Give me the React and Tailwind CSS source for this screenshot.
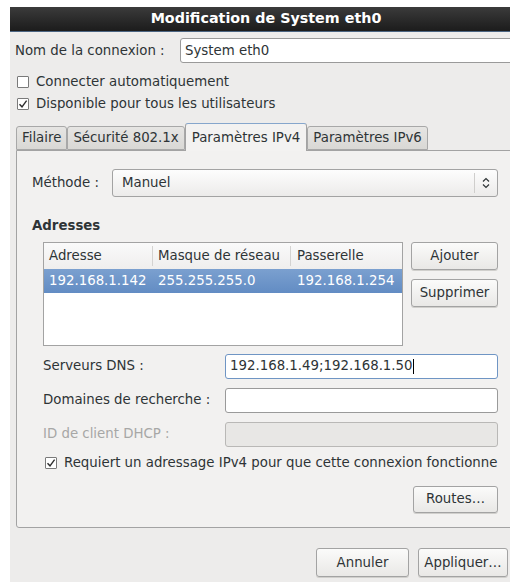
import React from 'react'

const font = { fontFamily: '"DejaVu Sans", Verdana, sans-serif' }

function CheckBox({ checked, label, className = '' }) {
  return (
    <div className={`flex items-center h-[20px] gap-[7px] ${className}`}>
      <span className="w-[12px] h-[12px] shrink-0 border border-[#7a7a7a] bg-white rounded-[1px] flex items-center justify-center">
        {checked && (
          <svg width="10" height="10" viewBox="0 0 10 10">
            <path d="M1.5 5.2 L4 7.8 L8.6 1.6" fill="none" stroke="#2e2e2e" strokeWidth="1.4" />
          </svg>
        )}
      </span>
      <span className="whitespace-nowrap">{label}</span>
    </div>
  )
}

function Button({ children, className = '' }) {
  return (
    <div
      className={`flex items-center justify-center shrink-0 border border-[#a3a3a3] rounded-[3px] bg-gradient-to-b from-[#fbfbfa] to-[#e9e8e6] shadow-[0_1px_0_#d0cfcc] text-[#2e3436] ${className}`}
    >
      {children}
    </div>
  )
}

function Tab({ label, active, className = '' }) {
  if (active) {
    return (
      <div className={`h-[28px] px-[6px] flex items-center border border-[#a3a3a3] border-b-0 border-t-[#86a6cc] rounded-t-[3px] bg-[#f3f2f1] -mb-px relative z-10 whitespace-nowrap ${className}`}>
        {label}
      </div>
    )
  }
  return (
    <div className={`h-[24px] px-[5px] flex items-center border border-[#a8a8a8] rounded-t-[3px] bg-gradient-to-b from-[#e6e5e3] to-[#d9d8d5] whitespace-nowrap ${className}`}>
      {label}
    </div>
  )
}

function Field({ value, focused, disabled, className = '' }) {
  let look = 'border-[#9a9a9a] bg-white'
  if (focused) look = 'border-[#6f95c4] bg-white'
  if (disabled) look = 'border-[#b9b8b6] bg-[#e8e7e5]'
  return (
    <div className={`h-[25px] shrink-0 border rounded-[3px] flex items-center px-[4px] whitespace-nowrap ${look} ${className}`}>
      {value}
      {focused && <span className="w-px h-[15px] bg-black" />}
    </div>
  )
}

export default function App() {
  return (
    <div style={font} className="w-[510px] h-[583px] overflow-hidden bg-white text-[13.33px] text-[#2e3436]">
      <div className="ml-[10px] mt-[7px] w-[512px] h-[575px] flex flex-col bg-[#edeceb]">
        {/* title bar */}
        <div className="h-[25px] shrink-0 flex items-center justify-center bg-gradient-to-b from-[#3b3b3b] to-[#1c1c1c] border-b border-[#4b6582] text-white font-bold text-[14.3px]">
          Modification de System eth0
        </div>

        <div className="flex items-center mt-[6px] ml-[5px]">
          <span className="w-[165px] shrink-0">Nom de la connexion :</span>
          <Field value="System eth0" className="w-[400px]" />
        </div>

        <CheckBox label="Connecter automatiquement" className="mt-[9px] ml-[7px]" />
        <CheckBox label="Disponible pour tous les utilisateurs" checked className="mt-[2px] ml-[7px]" />

        {/* notebook */}
        <div className="ml-[6px] mt-[8px] flex items-end h-[28px] shrink-0">
          <Tab label="Filaire" />
          <Tab label="Sécurité 802.1x" />
          <Tab label="Paramètres IPv4" active />
          <Tab label="Paramètres IPv6" />
        </div>
        <div className="ml-[6px] mr-[2px] h-[378px] shrink-0 border border-[#a3a3a3] rounded-b-[3px] bg-[#f2f1f0] flex flex-col pl-[15px] pr-[15px]">
          <div className="flex items-center mt-[18px]">
            <span className="w-[80px] shrink-0">Méthode :</span>
            <div className="w-[386px] h-[28px] shrink-0 border border-[#a3a3a3] rounded-[3px] bg-gradient-to-b from-[#fdfdfd] to-[#ecebea] flex items-center">
              <span className="pl-[9px] flex-1">Manuel</span>
              <span className="w-px h-[20px] bg-[#cfcecc]" />
              <span className="w-[22px] flex justify-center">
                <svg width="8" height="12" viewBox="0 0 8 12">
                  <path d="M1 4.5 L4 1.5 L7 4.5 M1 7.5 L4 10.5 L7 7.5" fill="none" stroke="#2e3436" strokeWidth="1.2" />
                </svg>
              </span>
            </div>
          </div>

          <div className="font-bold mt-[19px]">Adresses</div>

          <div className="flex mt-[6px] ml-[11px]">
            <div className="w-[360px] h-[104px] shrink-0 border border-[#a3a3a3] bg-white">
              <div className="flex h-[26px] items-center bg-gradient-to-b from-[#fafafa] to-[#efeeed] whitespace-nowrap">
                <span className="w-[109px] pl-[5px] border-r border-[#d4d3d1]">Adresse</span>
                <span className="w-[138px] pl-[5px] border-r border-[#d4d3d1]">Masque de réseau</span>
                <span className="pl-[6px]">Passerelle</span>
              </div>
              <div className="flex h-[24px] items-center bg-gradient-to-b from-[#7ba0cf] to-[#628cc3] text-white whitespace-nowrap">
                <span className="w-[109px] pl-[5px]">192.168.1.142</span>
                <span className="w-[138px] pl-[5px]">255.255.255.0</span>
                <span className="pl-[6px]">192.168.1.254</span>
              </div>
            </div>
            <div className="ml-[8px] flex flex-col gap-[9px]">
              <Button className="w-[87px] h-[28px]">Ajouter</Button>
              <Button className="w-[87px] h-[28px]">Supprimer</Button>
            </div>
          </div>

          <div className="ml-[11px] mt-[8px] flex flex-col gap-[9px]">
            <div className="flex items-center">
              <span className="w-[182px] shrink-0">Serveurs DNS :</span>
              <Field value="192.168.1.49;192.168.1.50" focused className="w-[273px]" />
            </div>
            <div className="flex items-center">
              <span className="w-[182px] shrink-0">Domaines de recherche :</span>
              <Field className="w-[273px]" />
            </div>
            <div className="flex items-center">
              <span className="w-[182px] shrink-0 text-[#a7a7a6]">ID de client DHCP :</span>
              <Field disabled className="w-[273px]" />
            </div>
          </div>

          <CheckBox
            checked
            label="Requiert un adressage IPv4 pour que cette connexion fonctionne"
            className="mt-[6px] ml-[13px]"
          />

          <div className="flex justify-end mt-[13px] pr-[6px]">
            <Button className="w-[85px] h-[27px]">Routes…</Button>
          </div>
        </div>

        <div className="flex justify-end gap-[9px] mt-[20px] pr-[14px]">
          <Button className="w-[93px] h-[29px]">Annuler</Button>
          <Button className="w-[90px] h-[29px]">Appliquer…</Button>
        </div>
      </div>
    </div>
  )
}
